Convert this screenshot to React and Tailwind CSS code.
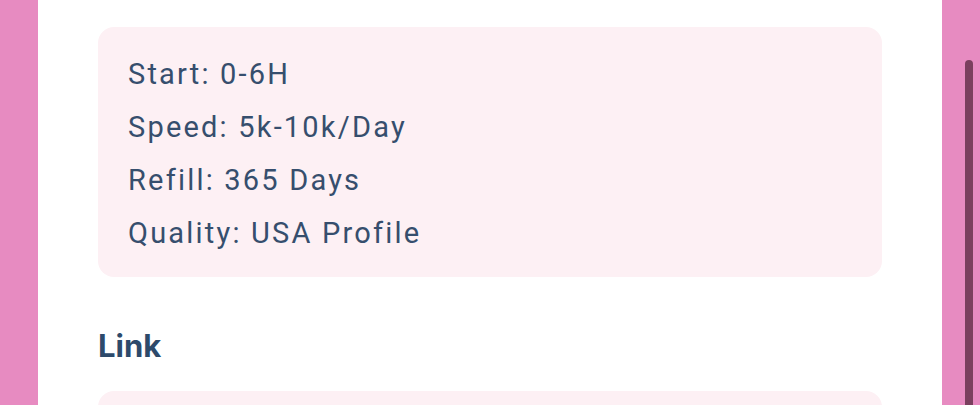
import React from "react";

const details = ["Start: 0-6H", "Speed: 5k-10k/Day", "Refill: 365 Days", "Quality: USA Profile"];

const App = () => {
  return (
    <div className="relative h-[405px] w-[980px] overflow-hidden bg-[#e78bc1]">
      <div className="mx-[38px] flow-root h-full overflow-hidden bg-white px-[60px]">
        <div className="-mt-[37px]">
          <h2 className="text-[31px] font-bold leading-[37px] text-[#2d4a6b]" style={{ fontFamily: "Inter, sans-serif" }}>
            Quantity
          </h2>
        </div>
        <div
          className="mt-[27px] rounded-[16px] bg-[#fdf0f4] px-[30px] pt-[21px] pb-[17px] text-[29px] leading-[53px] tracking-[2.2px] text-[#364e6d]"
          style={{ fontFamily: "Roboto, sans-serif" }}
        >
          {details.map((d) => (
            <p key={d}>{d}</p>
          ))}
        </div>
        <h2
          className="mt-[50px] text-[31px] font-bold leading-[37px] text-[#2d4a6b]"
          style={{ fontFamily: "Inter, sans-serif" }}
        >
          Link
        </h2>
        <div className="mt-[27px] h-[80px] rounded-[16px] bg-[#fdf0f4]" />
      </div>
      <div className="absolute right-[7px] top-[60px] h-[360px] w-[8px] rounded-full bg-[#7a3f5e]" />
    </div>
  );
};

export default App;
